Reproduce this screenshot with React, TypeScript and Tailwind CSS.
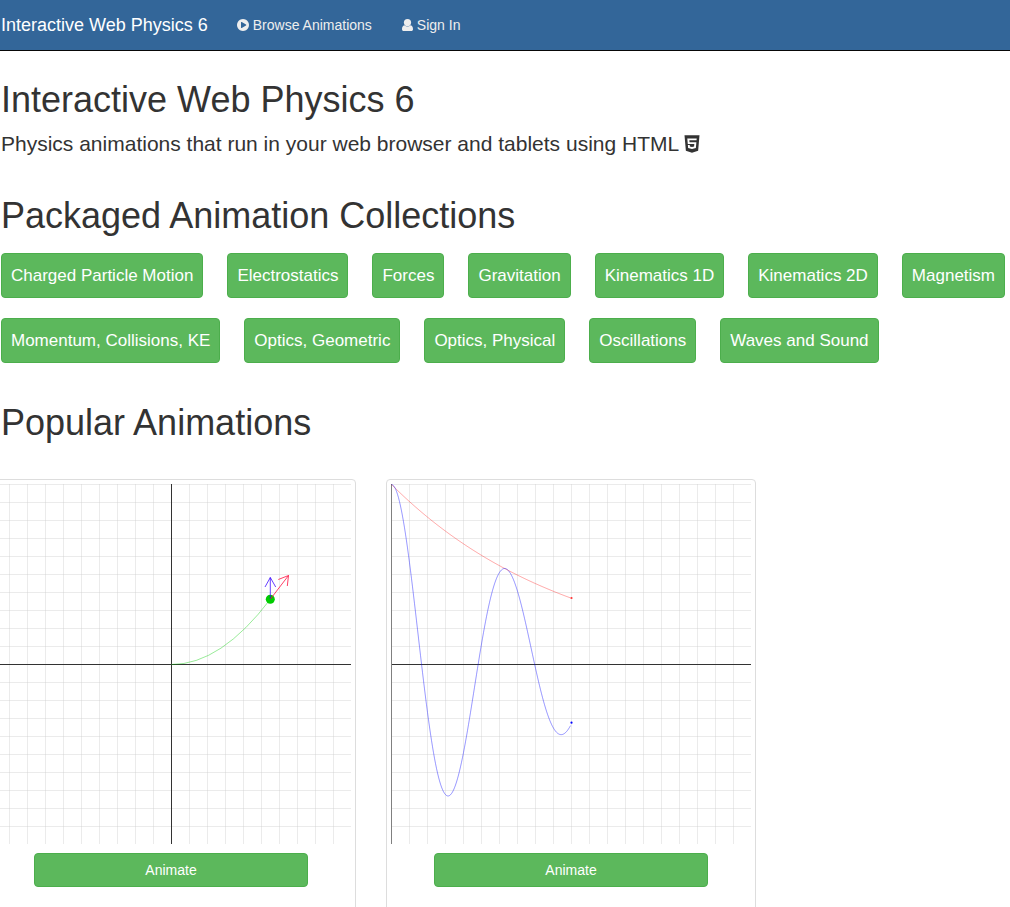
import React from "react";
import { FaHtml5 } from "react-icons/fa";

const collections = [
  "Charged Particle Motion",
  "Electrostatics",
  "Forces",
  "Gravitation",
  "Kinematics 1D",
  "Kinematics 2D",
  "Magnetism",
  "Momentum, Collisions, KE",
  "Optics, Geometric",
  "Optics, Physical",
  "Oscillations",
  "Waves and Sound",
];

function PlayIcon() {
  return (
    <svg viewBox="128 128 1536 1536" className="size-3 fill-current" aria-hidden="true">
      <path d="M896 128q209 0 385.5 103t279.5 279.5 103 385.5-103 385.5-279.5 279.5-385.5 103-385.5-103-279.5-279.5-103-385.5 103-385.5 279.5-279.5 385.5-103zm384 823q32-18 32-55t-32-55l-544-320q-31-19-64-1-32 19-32 56v640q0 37 32 56 16 8 32 8 17 0 32-9z" />
    </svg>
  );
}

function UserIcon() {
  return (
    <svg viewBox="0 0 11 12" className="h-3 w-[11px] fill-current" aria-hidden="true">
      <circle cx="5.5" cy="3.6" r="3.6" />
      <path d="M2.4 6.2Q5.5 8.6 8.6 6.2C10.4 6.6 11 8.2 11 10.2 11 11.3 10.3 12 9.3 12H1.7C.7 12 0 11.3 0 10.2 0 8.2.6 6.6 2.4 6.2z" />
    </svg>
  );
}

const gridSteps = Array.from({ length: 20 }, (_, i) => i * 18 + 0.5);

function Plot({ label, axisX, children }: { label: string; axisX: number; children: React.ReactNode }) {
  return (
    <svg viewBox="0 0 360 360" className="block w-full" role="img" aria-label={label} fill="none">
      {gridSteps.map((p) => (
        <g key={p} stroke="#cccccc" strokeOpacity="0.4">
          <path d={`M${p} 0V360`} />
          <path d={`M0 ${p}H360`} />
        </g>
      ))}
      <path d="M0 180.5H360" stroke="#333333" />
      <path d={`M${axisX} 0V360`} stroke={axisX < 1 ? "#808080" : "#333333"} />
      {children}
    </svg>
  );
}

const decay = (x: number) => 180 * Math.exp(-x / 180);
const samples = Array.from({ length: 180 }, (_, x) => x);
const envelope = samples.map((x) => `${x + 0.5},${(180.5 - decay(x)).toFixed(2)}`).join(" ");
const oscillation = samples
  .map((x) => `${x + 0.5},${(180.5 - decay(x) * (Math.cos(x / 18) + 0.1 * Math.sin(x / 18))).toFixed(2)}`)
  .join(" ");

function ParticlePlot() {
  return (
    <Plot label="Particle moving on a parabola" axisX={180.5}>
      <path d="M180.5 180.5Q230 180.5 279.5 115" stroke="#00cc00" strokeOpacity="0.4" />
      <circle cx="279.3" cy="115.2" r="4.5" fill="#00cc00" />
      <path d="M279.3 115V93.5M274 103L279.3 93.5L284.7 103" stroke="#3300ff" strokeOpacity="0.75" />
      <path d="M279.5 115L297.5 91.5M287.3 95.5L297.5 91.5L296.3 102" stroke="#ff0033" strokeOpacity="0.75" />
    </Plot>
  );
}

function DampingPlot() {
  return (
    <Plot label="Damped oscillation with its envelope" axisX={0.5}>
      <polyline points={envelope} stroke="#ff0000" strokeOpacity="0.35" />
      <polyline points={oscillation} stroke="#0000ff" strokeOpacity="0.4" />
      <circle cx="180.5" cy="114" r="1.1" fill="#ff3333" />
      <circle cx="180.5" cy="238.7" r="1.1" fill="#0000ff" />
    </Plot>
  );
}

function AnimationCard({ children }: { children: React.ReactNode }) {
  return (
    <article className="h-[460px] w-[370px] shrink-0 rounded border border-[#dddddd] p-1">
      {children}
      <div className="flex justify-center p-[9px]">
        <button
          type="button"
          className="w-4/5 rounded border border-[#4cae4c] bg-[#5cb85c] py-[6px] text-sm text-white"
        >
          Animate
        </button>
      </div>
    </article>
  );
}

export default function App() {
  return (
    <div className="h-screen overflow-hidden bg-white font-['Liberation_Sans',Arial,sans-serif] text-[#333333]">
      <nav className="flex h-[51px] items-center border-b border-[#080808] bg-[#336699] pl-px text-sm text-[#eeeeee]">
        <a href="#" className="text-lg text-white">
          Interactive Web Physics 6
        </a>
        <a href="#browse" className="ml-[29px] flex items-center gap-1">
          <PlayIcon />
          Browse Animations
        </a>
        <a href="#signin" className="ml-[30px] flex items-center gap-1">
          <UserIcon />
          Sign In
        </a>
      </nav>
      <main className="pl-px">
        <h1 className="mt-[29px] text-4xl leading-10">Interactive Web Physics 6</h1>
        <p className="mt-3 flex items-center gap-[3px] text-[21px] leading-6">
          Physics animations that run in your web browser and tablets using HTML
          <FaHtml5 className="size-5" />
        </p>
        <h2 className="mt-10 text-4xl leading-10">Packaged Animation Collections</h2>
        <div className="mt-[17px] flex flex-wrap gap-x-6 gap-y-5">
          {collections.map((name) => (
            <a
              key={name}
              href="#collection"
              className="rounded border border-[#4cae4c] bg-[#5cb85c] px-[9px] py-[10px] text-[17px] leading-[23px] text-white"
            >
              {name}
            </a>
          ))}
        </div>
        <h2 className="mt-10 text-4xl leading-10">Popular Animations</h2>
        <div className="-ml-[15px] mt-9 flex gap-[30px]">
          <AnimationCard>
            <ParticlePlot />
          </AnimationCard>
          <AnimationCard>
            <DampingPlot />
          </AnimationCard>
        </div>
      </main>
    </div>
  );
}
